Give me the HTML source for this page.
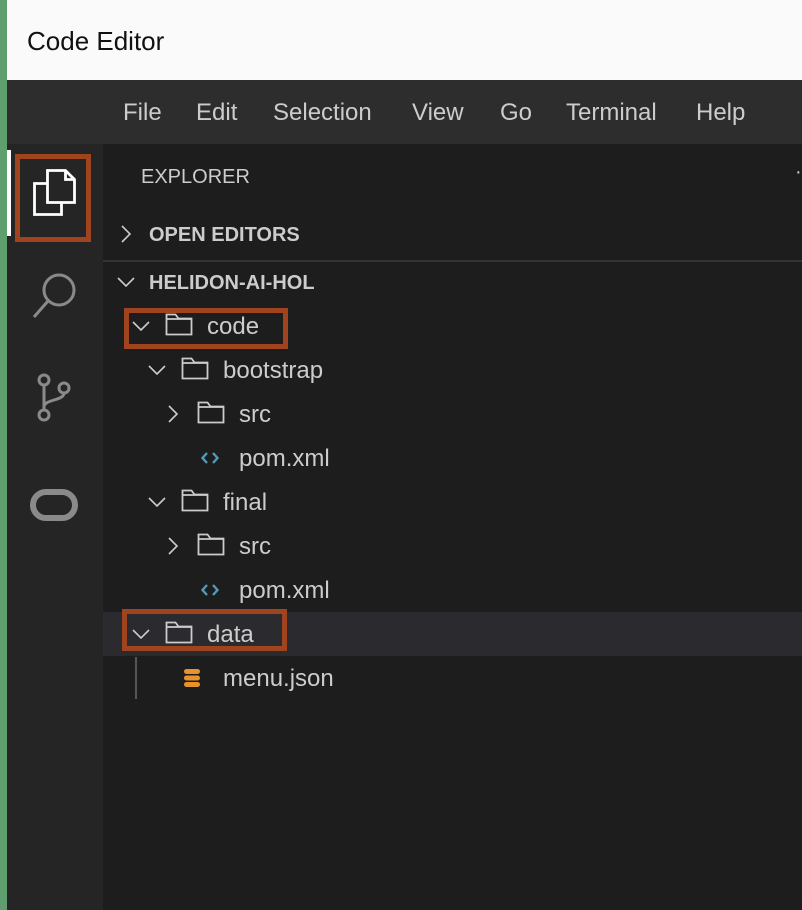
<!DOCTYPE html>
<html><head><meta charset="utf-8"><style>
*{margin:0;padding:0;box-sizing:border-box}
body{width:802px;height:910px;overflow:hidden;background:#1e1e1e;font-family:"Liberation Sans",Arial,sans-serif;position:relative}
.abs{position:absolute}
.green{left:0;top:0;width:7px;height:910px;background:#5f9f6f}
.title{left:7px;top:0;width:795px;height:80px;background:#fafafa;font-size:26px;color:#111;padding:26px 0 0 20px}
.menu{left:7px;top:80px;width:795px;height:64px;background:#2d2d2d;color:#ccc;font-size:24px}
.menu span{position:absolute;top:19px}
.act{left:7px;top:144px;width:96px;height:766px;background:#252526}
.side{left:103px;top:144px;width:699px;height:766px;background:#1d1d1d}
.t{position:absolute;color:#ccc;font-size:24px;line-height:44px;height:44px}
.h{position:absolute;color:#ccc;font-size:20px;font-weight:bold;line-height:44px}
.box{position:absolute;border:5px solid #a0441f}
svg{position:absolute}
</style></head><body>
<div class="abs green"></div>
<div class="abs title">Code Editor</div>
<div class="abs menu">
<span style="left:116px">File</span><span style="left:189px">Edit</span><span style="left:266px">Selection</span><span style="left:405px">View</span><span style="left:493px">Go</span><span style="left:559px">Terminal</span><span style="left:689px">Help</span>
</div>
<div class="abs act"></div>
<div class="abs" style="left:7px;top:150px;width:4px;height:86px;background:#fff"></div>
<div class="box" style="left:15px;top:154px;width:76px;height:88px"></div>
<svg style="left:0;top:0" width="100" height="240" fill="none" stroke="#fff" stroke-width="2.8">
<path d="M47.5 170.5h18l9 9v23h-27z M65.5 170.5v9h9"/><path d="M47.5 183.5H34.5v31h27v-12"/></svg>
<svg style="left:30px;top:270px" width="50" height="50" viewBox="0 0 50 50" fill="none" stroke="#8a8a8a" stroke-width="3"><circle cx="29" cy="20" r="15"/><path d="M18 31L4 47"/></svg>
<svg style="left:32px;top:372px" width="44" height="52" viewBox="0 0 44 52" fill="none" stroke="#8a8a8a" stroke-width="3"><circle cx="12" cy="8" r="5"/><circle cx="32" cy="16" r="5"/><circle cx="12" cy="43" r="5"/><path d="M12 13v25M32 21c0 8-20 6-20 14"/></svg>
<svg style="left:30px;top:488px" width="50" height="34" viewBox="0 0 50 34"><rect x="3" y="4" width="42" height="26" rx="13" fill="none" stroke="#8a8a8a" stroke-width="6"/></svg>
<div class="abs side"></div>
<div class="t" style="left:141px;top:155px;font-size:20px">EXPLORER</div>
<div class="t" style="left:795px;top:150px;font-size:20px">·</div>
<svg style="left:118px;top:224px" width="16" height="20" viewBox="0 0 16 20" fill="none" stroke="#ccc" stroke-width="1.6"><path d="M4 2l8 8-8 8"/></svg>
<div class="h" style="left:149px;top:213px">OPEN EDITORS</div>
<div class="abs" style="left:103px;top:260px;width:699px;height:2px;background:#333"></div>
<svg style="left:116px;top:274px" width="20" height="16" viewBox="0 0 20 16" fill="none" stroke="#ccc" stroke-width="1.6"><path d="M2 4l8 8 8-8"/></svg>
<div class="h" style="left:149px;top:261px">HELIDON-AI-HOL</div>
<div class="abs" style="left:103px;top:612px;width:699px;height:44px;background:#2a2a2f"></div>
<div class="abs" style="left:135px;top:657px;width:2px;height:42px;background:#555"></div>
<div class="box" style="left:124px;top:308px;width:164px;height:41px"></div>
<div class="box" style="left:122px;top:609px;width:165px;height:42px"></div>
<svg width="0" height="0"><defs>
<g id="dn"><path d="M2 4l8 8 8-8" fill="none" stroke="#ccc" stroke-width="1.6"/></g>
<g id="rt"><path d="M4 2l8 8-8 8" fill="none" stroke="#ccc" stroke-width="1.6"/></g>
<g id="fd"><path d="M1.5 1.5h9l3 4h13v16h-25z M1.5 6h25" fill="none" stroke="#ccc" stroke-width="1.8"/></g>
<g id="xm"><path d="M6 2L1.5 7 6 12M12 2l4.5 5L12 12" fill="none" stroke="#519aba" stroke-width="2.4"/></g>
</defs></svg>
<svg style="left:131px;top:318px" width="20" height="16"><use href="#dn"/></svg>
<svg style="left:165px;top:313px" width="29" height="24"><use href="#fd"/></svg>
<div class="t" style="left:207px;top:305px">code</div>
<svg style="left:147px;top:362px" width="20" height="16"><use href="#dn"/></svg>
<svg style="left:181px;top:357px" width="29" height="24"><use href="#fd"/></svg>
<div class="t" style="left:223px;top:349px">bootstrap</div>
<svg style="left:165px;top:404px" width="16" height="20"><use href="#rt"/></svg>
<svg style="left:197px;top:401px" width="29" height="24"><use href="#fd"/></svg>
<div class="t" style="left:239px;top:393px">src</div>
<svg style="left:201px;top:451px" width="18" height="14"><use href="#xm"/></svg>
<div class="t" style="left:239px;top:437px">pom.xml</div>
<svg style="left:147px;top:494px" width="20" height="16"><use href="#dn"/></svg>
<svg style="left:181px;top:489px" width="29" height="24"><use href="#fd"/></svg>
<div class="t" style="left:223px;top:481px">final</div>
<svg style="left:165px;top:536px" width="16" height="20"><use href="#rt"/></svg>
<svg style="left:197px;top:533px" width="29" height="24"><use href="#fd"/></svg>
<div class="t" style="left:239px;top:525px">src</div>
<svg style="left:201px;top:583px" width="18" height="14"><use href="#xm"/></svg>
<div class="t" style="left:239px;top:569px">pom.xml</div>
<svg style="left:131px;top:626px" width="20" height="16"><use href="#dn"/></svg>
<svg style="left:165px;top:621px" width="29" height="24"><use href="#fd"/></svg>
<div class="t" style="left:207px;top:613px">data</div>
<svg style="left:183px;top:668px" width="18" height="20" viewBox="0 0 18 20"><rect x="1" y="1" width="16" height="5" rx="2.5" fill="#e8912d"/><rect x="1" y="7.5" width="16" height="5" rx="2.5" fill="#e8912d"/><rect x="1" y="14" width="16" height="5" rx="2.5" fill="#e8912d"/></svg>
<div class="t" style="left:223px;top:657px">menu.json</div>
</body></html>
